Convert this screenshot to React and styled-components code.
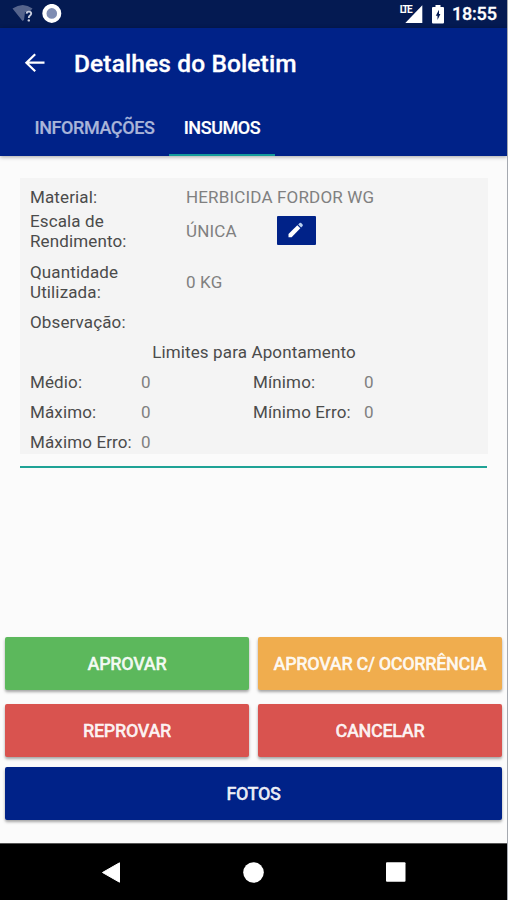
import React from 'react'
import styled, { createGlobalStyle } from 'styled-components'

const details = [
    { label: 'Material:', value: 'HERBICIDA FORDOR WG', gap: 4 },
    { label: 'Escala de Rendimento:', value: 'ÚNICA', editable: true, gap: 11 },
    { label: 'Quantidade Utilizada:', value: '0 KG' },
    { label: 'Observação:', value: '' },
]

const limits = [
    { label: 'Médio:', value: 0 },
    { label: 'Mínimo:', value: 0 },
    { label: 'Máximo:', value: 0 },
    { label: 'Mínimo Erro:', value: 0 },
    { label: 'Máximo Erro:', value: 0 },
]

function StatusBar() {
    return (
        <StatusContainer>
            <svg width="22" height="18" viewBox="0 0 22 18">
                <path d="M0.5 3.5Q11 -3.5 20.5 3.5L17.5 7L13 7L12 15L10.5 16Z" fill="#56648c" />
                <path d="M14.6 8.6Q14.8 6.6 16.9 6.6Q19.2 6.6 19.2 8.6Q19.2 9.8 17.8 10.8Q16.8 11.6 16.8 13" fill="none" stroke="#c9cede" strokeWidth="1.9" />
                <circle cx="16.8" cy="15.4" r="1.2" fill="#c9cede" />
            </svg>
            <svg width="20" height="20" viewBox="0 0 20 20">
                <circle cx="9.8" cy="9.4" r="7.4" fill="#7f8db3" stroke="#fff" strokeWidth="4.2" />
            </svg>
            <Spacer />
            <Signal>
                <span>LTE</span>
                <svg width="18" height="19" viewBox="0 0 18 19">
                    <path d="M0.3 18L17.3 0.3V18Z" fill="#fff" />
                </svg>
            </Signal>
            <svg width="12" height="19" viewBox="0 0 12 19">
                <path d="M3.5 0H8.5V2H11Q12 2 12 3V17.5Q12 18.5 11 18.5H1Q0 18.5 0 17.5V3Q0 2 1 2H3.5Z" fill="#fff" />
                <path d="M7 4.8L3.8 10.8H5.5V15L8.4 9H7Z" fill="#041a52" />
            </svg>
            <Clock>18:55</Clock>
        </StatusContainer>
    )
}

function App() {
    return (
        <Screen>
            <GlobalStyle />
            <StatusBar />
            <Header>
                <TitleRow>
                    <svg width="22" height="20" viewBox="0 0 22 20">
                        <path d="M20.5 9.7H2.5M11.2 1.2L2.4 9.7L11.2 18.2" fill="none" stroke="#fff" strokeWidth="2.2" />
                    </svg>
                    <Title>Detalhes do Boletim</Title>
                </TitleRow>
                <Tabs>
                    <Tab $width={149}>
                        <TabLabel>INFORMAÇÕES</TabLabel>
                    </Tab>
                    <Tab $width={106} $active>
                        <TabLabel>INSUMOS</TabLabel>
                    </Tab>
                </Tabs>
            </Header>
            <Content>
                <Card>
                    {details.map(item => (
                        <DetailRow key={item.label} $gap={item.gap}>
                            <Label>{item.label}</Label>
                            <Value>{item.value}</Value>
                            {item.editable && (
                                <EditButton>
                                    <svg width="16" height="16" viewBox="0 0 16 16">
                                        <path d="M0.5 15.2V12L9.3 3.2L12.3 6.2L3.6 15.2Z" fill="#fff" />
                                        <path d="M10.2 2.4L11.6 1Q12.4 0.4 13.2 1L14.6 2.4Q15.2 3.2 14.6 4L13.1 5.4Z" fill="#b9d0f0" />
                                    </svg>
                                </EditButton>
                            )}
                        </DetailRow>
                    ))}
                    <LimitsTitle>Limites para Apontamento</LimitsTitle>
                    <LimitsGrid>
                        {limits.map(item => (
                            <Limit key={item.label}>
                                <Label>{item.label}</Label>
                                <Value>{item.value}</Value>
                            </Limit>
                        ))}
                    </LimitsGrid>
                </Card>
                <Divider />
            </Content>
            <Actions>
                <Button $color="#5cb85c">APROVAR</Button>
                <Button $color="#f0ad4e">APROVAR C/ OCORRÊNCIA</Button>
                <Button $color="#d9534f">REPROVAR</Button>
                <Button $color="#d9534f">CANCELAR</Button>
                <PhotosButton $color="#002288">FOTOS</PhotosButton>
            </Actions>
            <NavBar>
                <svg width="18" height="21" viewBox="0 0 18 21">
                    <path d="M0.5 10.5L17.5 0.8V20.2Z" fill="#fff" stroke="#fff" strokeLinejoin="round" />
                </svg>
                <svg width="21" height="21" viewBox="0 0 21 21">
                    <circle cx="10.5" cy="10.5" r="10.3" fill="#fff" />
                </svg>
                <svg width="20" height="20" viewBox="0 0 20 20">
                    <rect y="0.3" width="19.5" height="19.5" rx="1" fill="#fff" />
                </svg>
            </NavBar>
        </Screen>
    )
}

export default App

const GlobalStyle = createGlobalStyle`
    body {
        margin: 0;
    }

    * {
        box-sizing: border-box;
    }

    svg {
        display: block;
        flex-shrink: 0;
    }
`

const Screen = styled.div`
    width: 508px;
    height: 900px;
    display: flex;
    flex-direction: column;
    overflow: hidden;
    background: #fbfbfb;
    border-right: 1px solid #a5a9b0;
    font-family: Roboto, sans-serif;
`

const StatusContainer = styled.div`
    height: 28px;
    flex-shrink: 0;
    display: flex;
    align-items: center;
    padding: 0 9px 0 12px;
    background: #041a52;

    svg + svg {
        margin-left: 8px;
    }
`

const Spacer = styled.div`
    flex: 1;
`

const Signal = styled.div`
    display: flex;
    align-items: center;
    margin-right: 9px;

    span {
        align-self: flex-start;
        margin-right: -6px;
        font-size: 10px;
        font-weight: 700;
        line-height: 9px;
        letter-spacing: -1.6px;
        color: #fff;
    }
`

const Clock = styled.span`
    width: 46px;
    margin-left: 8px;
    font-size: 18px;
    font-weight: 500;
    line-height: 28px;
    letter-spacing: -0.2px;
    white-space: nowrap;
    color: #fff;
    -webkit-text-stroke: 0.3px currentColor;
`

const Header = styled.header`
    height: 128px;
    flex-shrink: 0;
    display: flex;
    flex-direction: column;
    background: #002288;
    box-shadow: 0 1px 4px rgba(0, 0, 0, 0.35);
`

const TitleRow = styled.div`
    height: 70px;
    display: flex;
    align-items: center;
    padding-left: 24px;
`

const Title = styled.h1`
    margin: 2px 0 0 28px;
    font-size: 24.5px;
    font-weight: 500;
    line-height: 28px;
    letter-spacing: 0.12px;
    color: #fff;
    -webkit-text-stroke: 0.3px currentColor;
`

const Tabs = styled.div`
    flex: 1;
    display: flex;
    padding-left: 20px;
`

const Tab = styled.div`
    width: ${props => props.$width}px;
    display: flex;
    justify-content: center;
    padding-top: 20px;
    border-bottom: 2px solid ${props => (props.$active ? '#149b9b' : 'transparent')};
    color: ${props => (props.$active ? '#fff' : '#a9b5d9')};
`

const TabLabel = styled.span`
    font-size: 18px;
    font-weight: 500;
    line-height: 20px;
    letter-spacing: -0.42px;
    -webkit-text-stroke: 0.2px currentColor;
`

const Content = styled.main`
    flex: 1;
    padding: 22px 20px 0;
`

const Card = styled.section`
    width: 468px;
    height: 276px;
    padding: 9px 10px 0;
    background: #f4f4f4;
`

const DetailRow = styled.div`
    display: flex;
    align-items: center;
    margin-bottom: ${props => props.$gap || 10}px;

    > :first-child {
        width: 156px;
        padding-right: 40px;
    }
`

const Label = styled.span`
    font-size: 17px;
    line-height: 20px;
    letter-spacing: 0.13px;
    color: #4b4b4b;
`

const Value = styled.span`
    font-size: 17px;
    line-height: 20px;
    letter-spacing: 0.16px;
    color: #808080;
`

const EditButton = styled.button`
    width: 39px;
    height: 29px;
    display: flex;
    align-items: center;
    justify-content: center;
    margin: -2px 0 0 40px;
    padding: 0;
    border: 0;
    border-radius: 1px;
    background: #002288;
`

const LimitsTitle = styled.div`
    margin-bottom: 10px;
    text-align: center;
    font-size: 17px;
    line-height: 20px;
    letter-spacing: 0.13px;
    color: #4b4b4b;
`

const LimitsGrid = styled.div`
    display: grid;
    grid-template-columns: 223px 223px;
    row-gap: 10px;
`

const Limit = styled.div`
    display: flex;

    > :first-child {
        width: 111px;
    }
`

const Divider = styled.div`
    width: 467px;
    height: 2px;
    margin-top: 12px;
    background: #1fa396;
`

const Actions = styled.div`
    display: grid;
    grid-template-columns: 244px 244px;
    column-gap: 9px;
    padding: 0 5px 23px;
`

const Button = styled.button`
    height: 53px;
    margin-bottom: 14px;
    padding: 0;
    border: 0;
    border-radius: 2px;
    background: ${props => props.$color};
    box-shadow: 0 2px 3px rgba(0, 0, 0, 0.35);
    font-family: inherit;
    font-size: 18px;
    font-weight: 500;
    line-height: 20px;
    letter-spacing: -0.34px;
    white-space: nowrap;
    color: rgba(255, 255, 255, 0.93);
    -webkit-text-stroke: 0.3px currentColor;
`

const PhotosButton = styled(Button)`
    grid-column: 1 / 3;
    margin: -4px 0 0;
`

const NavBar = styled.nav`
    height: 57px;
    flex-shrink: 0;
    display: flex;
    align-items: center;
    justify-content: space-between;
    padding: 0 101px 0 102px;
    border-top: 1px solid #555;
    background: #000;
`
